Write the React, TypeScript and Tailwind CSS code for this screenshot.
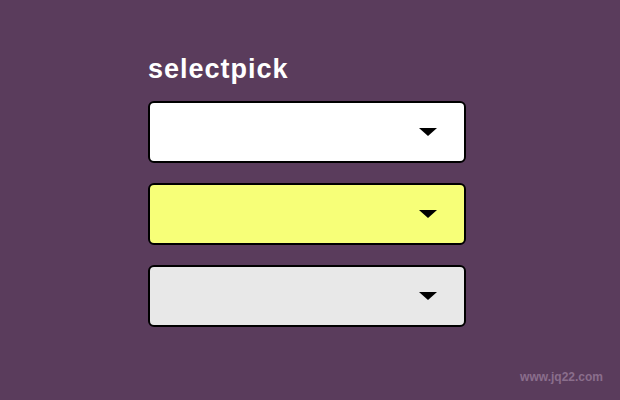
import React from "react";

const Caret: React.FC = () => (
  <svg width="18" height="8" viewBox="0 0 18 8" className="block">
    <polygon points="0,0 18,0 9,8" fill="#000" />
  </svg>
);

const SelectBox: React.FC<{ bg: string }> = ({ bg }) => (
  <div
    className={`flex h-[62px] w-[318px] items-center justify-end rounded-[6px] border-2 border-black pr-[27px] ${bg}`}
  >
    <Caret />
  </div>
);

const App: React.FC = () => {
  return (
    <div className="relative h-[400px] w-[620px] overflow-hidden bg-[#5a3c5c] font-['Liberation_Sans',Arial,sans-serif]">
      <div className="flex flex-col pl-[148px] pt-[54px]">
        <h1 className="text-[27px] leading-[30px] font-bold tracking-[1px] text-white">
          selectpick
        </h1>
        <div className="mt-[17px] flex flex-col gap-[20px]">
          <SelectBox bg="bg-white" />
          <SelectBox bg="bg-[#f7ff78]" />
          <SelectBox bg="bg-[#e8e8e8]" />
        </div>
      </div>
      <span className="absolute right-[17px] bottom-[14px] text-[12px] font-bold text-[#8a6e8c]">
        www.jq22.com
      </span>
    </div>
  );
};

export default App;
